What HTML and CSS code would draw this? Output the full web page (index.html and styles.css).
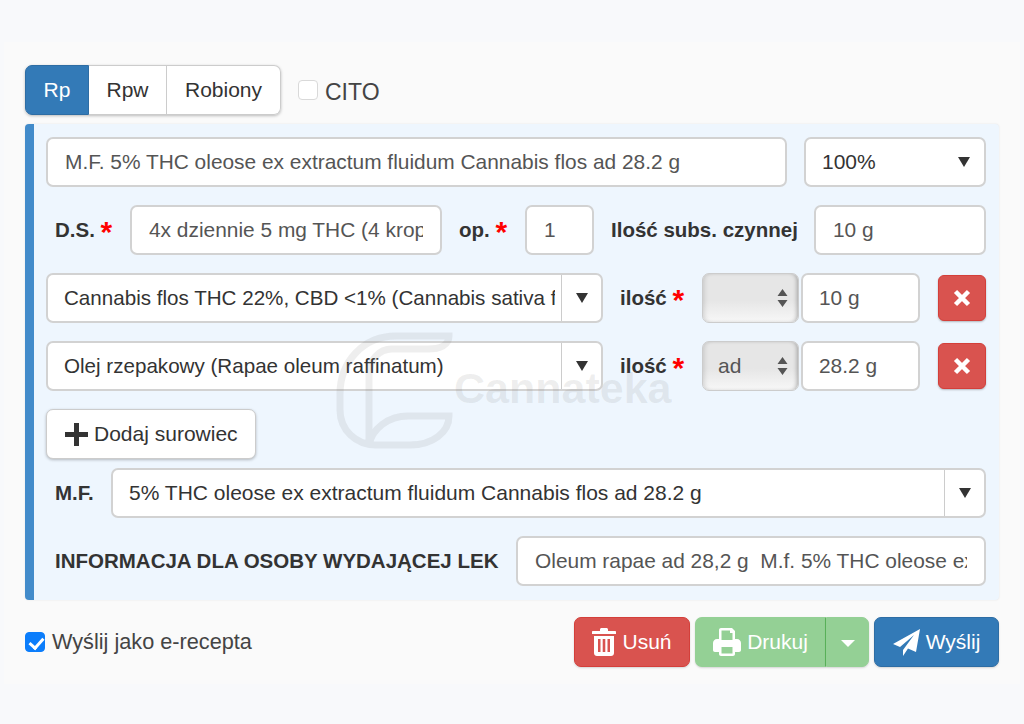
FILE: index.html
```html
<!DOCTYPE html>
<html lang="pl">
<head>
    <meta charset="UTF-8">
    <meta name="viewport" content="width=device-width, initial-scale=1.0">
    <title>Recepta</title>
    <link rel="stylesheet" href="styles.css">
</head>
<body>
    <div class="container">
        <!-- Rodzaj recepty -->
        <div class="top-bar">
            <div class="tabs">
                <button class="tab tab-active" type="button">Rp</button>
                <button class="tab tab-rpw" type="button">Rpw</button>
                <button class="tab tab-robiony" type="button">Robiony</button>
            </div>
            <label class="cito"><input class="check" type="checkbox">CITO</label>
        </div>

        <div class="panel">
            <div class="row">
                <input class="field grow" type="text" value="M.F. 5% THC oleose ex extractum fluidum Cannabis flos ad 28.2 g">
                <div class="select select-dose">
                    <span class="select-text">100%</span>
                    <span class="caret-box caret-plain"><span class="caret"></span></span>
                </div>
            </div>

            <div class="row">
                <span class="label label-ds">D.S. <span class="req">*</span></span>
                <input class="field field-ds" type="text" value="4x dziennie 5 mg THC (4 krople)">
                <span class="label label-op">op. <span class="req">*</span></span>
                <input class="field field-op" type="text" value="1">
                <span class="label label-subs">Ilość subs. czynnej</span>
                <input class="field grow" type="text" value="10 g">
            </div>

            <div class="row">
                <div class="select select-item grow">
                    <span class="select-text">Cannabis flos THC 22%, CBD &lt;1% (Cannabis sativa flos)</span>
                    <span class="caret-box"><span class="caret"></span></span>
                </div>
                <span class="label label-amount">ilość <span class="req">*</span></span>
                <div class="amount">
                    <div class="native-select">
                        <span></span>
                        <svg class="updown" width="11" height="18" viewBox="0 0 11 18"><path d="M5.5 0 10.500 7H.5zM5.500 18 .5 11h10z"/></svg>
                    </div>
                    <input class="field field-amount" type="text" value="10 g">
                </div>
                <button class="btn-remove" type="button" aria-label="Usuń">
                    <svg width="18" height="18" viewBox="0 0 18 18"><path d="M2.500 2.500l13 13M15.500 2.500l-13 13"/></svg>
                </button>
            </div>

            <div class="row">
                <div class="select select-item grow">
                    <span class="select-text">Olej rzepakowy (Rapae oleum raffinatum)</span>
                    <span class="caret-box"><span class="caret"></span></span>
                </div>
                <span class="label label-amount">ilość <span class="req">*</span></span>
                <div class="amount">
                    <div class="native-select">
                        <span>ad</span>
                        <svg class="updown" width="11" height="18" viewBox="0 0 11 18"><path d="M5.5 0 10.500 7H.5zM5.500 18 .5 11h10z"/></svg>
                    </div>
                    <input class="field field-amount" type="text" value="28.2 g">
                </div>
                <button class="btn-remove" type="button" aria-label="Usuń">
                    <svg width="18" height="18" viewBox="0 0 18 18"><path d="M2.500 2.500l13 13M15.500 2.500l-13 13"/></svg>
                </button>
            </div>

            <div class="row row-add">
                <button class="btn-add" type="button">
                    <svg width="25" height="25" viewBox="0 0 25 25"><path d="M12.500 1v23M1 12.500h23"/></svg>
                    Dodaj surowiec
                </button>
            </div>

            <div class="row">
                <span class="label label-mf">M.F.</span>
                <div class="select grow">
                    <span class="select-text">5% THC oleose ex extractum fluidum Cannabis flos ad 28.2 g</span>
                    <span class="caret-box"><span class="caret"></span></span>
                </div>
            </div>

            <div class="row">
                <span class="label label-info">INFORMACJA DLA OSOBY WYDAJĄCEJ LEK</span>
                <input class="field grow" type="text" value="Oleum rapae ad 28,2 g  M.f. 5% THC oleose ex extractum">
            </div>

            <!-- Znak wodny -->
            <div class="watermark">
                <svg width="118" height="118" viewBox="0 0 118 118"><path d="M113 4H60C27 4 4 30 4 62V78C4 98 20 113 40 113H74C97 113 113 100 113 84H72C52 84 36 97 33 113V42C33 28 43 17 56 17H92C104 17 113 13 113 4Z"/></svg>
                <span>Cannateka</span>
            </div>
        </div>

        <div class="bottom-bar">
            <label class="erecepta"><input class="check" type="checkbox" checked>Wyślij jako e-recepta</label>
            <div class="actions">
                <button class="btn btn-red" type="button">
                    <svg width="24" height="28" viewBox="0 0 24 28"><path fill-rule="evenodd" d="M8 1.500C8 .7 8.700 0 9.500 0h5c.8 0 1.500.7 1.500 1.500V3h7c.6 0 1 .4 1 1v2H0V4c0-.6.4-1 1-1h7zM2 8h20v17c0 1.700-1.300 3-3 3H5c-1.700 0-3-1.300-3-3zm4 3v13h2.500V11zm4.700 0v13h2.600V11zm4.800 0v13H18V11z"/></svg>
                    Usuń
                </button>
                <div class="split">
                    <button class="btn btn-green btn-print" type="button">
                        <svg width="28" height="28" viewBox="0 0 28 28"><path fill-rule="evenodd" d="M6 2c0-1.100.9-2 2-2h11l3 3v8h2c2.200 0 4 1.800 4 4v7c0 1-.8 2-2 2h-4v2c0 1.100-.9 2-2 2H8c-1.100 0-2-.9-2-2v-2H2c-1.200 0-2-1-2-2v-7c0-2.200 1.800-4 4-4h2zm2.500.5V12h11V5h-2.500V2.500zm0 16.500v6.500h11V19z"/></svg>
                        Drukuj
                    </button>
                    <button class="btn btn-green btn-more" type="button" aria-label="Więcej"><span class="caret-white"></span></button>
                </div>
                <button class="btn btn-blue" type="button">
                    <svg width="27" height="27" viewBox="0 0 27 27"><path fill-rule="evenodd" d="M27 0 23 23l-8-3.500L10 27v-6L21 6 7 18l-7-3z"/></svg>
                    Wyślij
                </button>
            </div>
        </div>
    </div>
</body>
</html>
```

FILE: styles.css
```css
* {
    box-sizing: border-box;
}
body {
    margin: 0;
    min-height: 100vh;
    padding: 42px 4px 0;
    background: #f8f9fb;
    font-family: 'Liberation Sans', Arial, sans-serif;
    font-size: 21px;
    color: #333;
}
.container {
    height: 642px;
    padding: 23px 21px 0;
    background: #fafafa;
}
.top-bar {
    display: flex;
    align-items: center;
    height: 50px;
    margin-bottom: 9px;
}
.tabs {
    display: flex;
    height: 50px;
    border-radius: 7px;
    box-shadow: 0 1px 3px rgba(0, 0, 0, 0.25);
}
.tab {
    height: 50px;
    padding: 0;
    border: 1px solid #ccc;
    border-left: 0;
    background: #fff;
    color: #333;
    font: 21px 'Liberation Sans', Arial, sans-serif;
}
.tab-active {
    width: 64px;
    border: 1px solid #2e6da4;
    border-radius: 7px 0 0 7px;
    background: #337ab7;
    color: #fff;
}
.tab-rpw {
    width: 78px;
}
.tab-robiony {
    width: 114px;
    border-radius: 0 7px 7px 0;
}
.check {
    appearance: none;
    position: relative;
    flex: none;
    width: 20px;
    height: 20px;
    margin: 0;
    border: 1px solid #d9d9d9;
    border-radius: 4px;
    background: #fff;
}
.check:checked {
    border-color: #0b7dfb;
    background: #0b7dfb;
}
.check:checked::before {
    content: "";
    position: absolute;
    left: 6px;
    top: 2px;
    width: 6px;
    height: 11px;
    border: solid #fff;
    border-width: 0 3px 3px 0;
    transform: rotate(42deg);
}
.cito {
    display: flex;
    align-items: center;
    gap: 7px;
    margin: 4px 0 0 17px;
    font-size: 23px;
    color: #444;
}
.cito .check {
    margin-top: -4px;
}
.panel {
    position: relative;
    height: 476px;
    padding: 13px 13px 0 12px;
    border-left: 9px solid #428bca;
    border-radius: 4px;
    background: #eef6fe;
    box-shadow: 0 0 2px rgba(0, 0, 0, 0.1);
}
.row {
    display: flex;
    align-items: center;
    gap: 17px;
    height: 50px;
    margin-bottom: 18px;
}
.row-add {
    margin-bottom: 9px;
}
.grow {
    flex: 1;
    min-width: 0;
}
.field {
    height: 50px;
    padding: 0 17px;
    border: 2px solid #d2d2d2;
    border-radius: 7px;
    background: #fff;
    color: #555;
    font: 20.9px 'Liberation Sans', Arial, sans-serif;
    outline: none;
}
.field-ds {
    flex: none;
    width: 312px;
}
.field-op {
    flex: none;
    width: 69px;
}
.field-amount {
    flex: none;
    width: 119px;
    padding: 0 16px;
}
.label {
    flex: none;
    padding-left: 9px;
    font-size: 20.5px;
    font-weight: bold;
    color: #333;
    white-space: nowrap;
}
.req {
    color: #f00;
    font-size: 30px;
    line-height: 0;
    vertical-align: -5px;
}
.label-ds {
    width: 67px;
}
.label-op {
    padding-left: 0;
    width: 49px;
}
.label-subs {
    padding-left: 0;
    width: 186px;
}
.label-amount {
    padding-left: 0;
    width: 65px;
}
.label-mf {
    width: 48px;
}
.label-info {
    width: 453px;
}
.select {
    display: flex;
    align-items: center;
    height: 50px;
    border: 2px solid #d2d2d2;
    border-radius: 7px;
    background: #fff;
    overflow: hidden;
}
.select-text {
    flex: 1;
    min-width: 0;
    margin-right: 6px;
    padding-left: 16px;
    white-space: nowrap;
    overflow: hidden;
}
.select-item {
    font-size: 20.6px;
}
.select-dose {
    flex: none;
    width: 182px;
}
.caret-box {
    flex: none;
    display: flex;
    justify-content: center;
    align-items: center;
    width: 40px;
    height: 46px;
    border-left: 1px solid #ccc;
}
.caret-plain {
    border-left: 0;
}
.caret {
    width: 0;
    height: 0;
    border-left: 6px solid transparent;
    border-right: 6px solid transparent;
    border-top: 10px solid #333;
}
.amount {
    flex: none;
    display: flex;
    gap: 2px;
}
.native-select {
    display: flex;
    align-items: center;
    justify-content: space-between;
    width: 97px;
    height: 50px;
    padding: 0 10px 0 15px;
    border: 1px solid #ccc;
    border-radius: 7px;
    background: linear-gradient(#e6e6e6 55%, #f7f7f7 100%);
    box-shadow: inset 4px 0 5px -3px rgba(0, 0, 0, 0.15), inset -3px 0 4px -2px rgba(0, 0, 0, 0.3);
    color: #555;
}
.updown {
    fill: #555;
}
.btn-remove {
    flex: none;
    display: flex;
    align-items: center;
    justify-content: center;
    width: 48px;
    height: 46px;
    margin-left: 1px;
    padding: 0;
    border: 1px solid #d43f3a;
    border-radius: 6px;
    background: #d9534f;
    box-shadow: 0 1px 2px rgba(0, 0, 0, 0.25);
}
.btn-remove path {
    fill: none;
    stroke: #fff;
    stroke-width: 4.500;
}
.btn-add {
    display: flex;
    align-items: center;
    gap: 5px;
    width: 210px;
    height: 50px;
    padding: 0 0 0 17px;
    border: 1px solid #ccc;
    border-radius: 7px;
    background: #fff;
    box-shadow: 0 1px 3px rgba(0, 0, 0, 0.25);
    color: #333;
    font: 21px 'Liberation Sans', Arial, sans-serif;
}
.btn-add path {
    fill: none;
    stroke: #333;
    stroke-width: 5;
}
.watermark {
    position: absolute;
    left: 302px;
    top: 208px;
    display: flex;
    align-items: center;
    color: rgba(120, 120, 120, 0.13);
    font-size: 43px;
    font-weight: bold;
    pointer-events: none;
}
.watermark svg {
    fill: none;
    stroke: rgba(120, 120, 120, 0.13);
    stroke-width: 7;
}
.watermark span {
    margin-bottom: 6px;
}
.bottom-bar {
    display: flex;
    justify-content: space-between;
    align-items: center;
    height: 50px;
    margin-top: 17px;
}
.erecepta {
    display: flex;
    align-items: center;
    gap: 7px;
    font-size: 21.7px;
    color: #444;
}
.actions {
    display: flex;
    gap: 5px;
}
.split {
    display: flex;
}
.btn {
    display: flex;
    align-items: center;
    justify-content: center;
    gap: 6px;
    height: 50px;
    padding: 0;
    border: 1px solid;
    border-radius: 7px;
    color: #fff;
    font: 21px 'Liberation Sans', Arial, sans-serif;
    box-shadow: 0 1px 2px rgba(0, 0, 0, 0.15);
}
.btn svg {
    fill: #fff;
}
.btn-red {
    width: 116px;
    border-color: #d43f3a;
    background: #d9534f;
}
.btn-green {
    border-color: #94d095;
    background: #94d095;
}
.btn-print {
    width: 131px;
    border-radius: 7px 0 0 7px;
    border-right-color: #5cb85c;
}
.btn-more {
    width: 43px;
    border-radius: 0 7px 7px 0;
}
.caret-white {
    margin-top: 3px;
    border-left: 7px solid transparent;
    border-right: 7px solid transparent;
    border-top: 7px solid #fff;
}
.btn-blue {
    width: 125px;
    border-color: #2e6da4;
    background: #337ab7;
}
```
